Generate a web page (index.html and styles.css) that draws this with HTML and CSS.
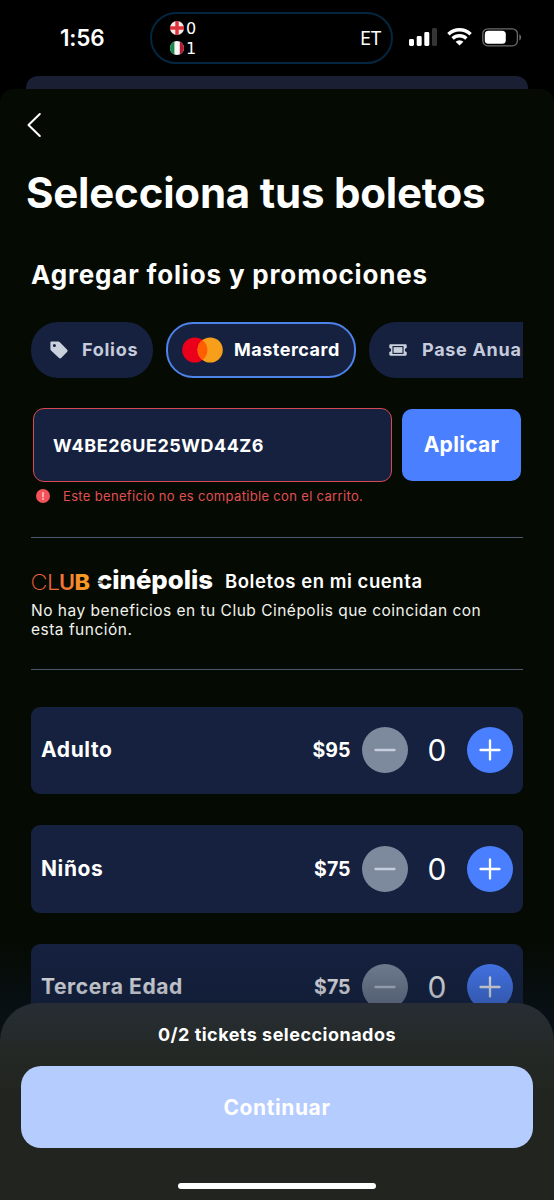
FILE: index.html
```html
<!DOCTYPE html>
<html lang="es">
<head>
<meta charset="utf-8">
<meta name="viewport" content="width=device-width, initial-scale=1">
<title>Selecciona tus boletos</title>
<link rel="stylesheet" href="styles.css">
</head>
<body>
<div class="phone">
  <header class="status">
    <div class="time">1:56</div>
    <div class="island">
      <div class="scores">
        <div class="score"><svg class="flag" viewBox="0 0 14 14"><circle cx="7" cy="7" r="7" fill="#f4ece6"/><path d="M7 0v14M0 7h14" stroke="#e0323c" stroke-width="3.4"/></svg><span>0</span></div>
        <div class="score"><svg class="flag" viewBox="0 0 14 14"><defs><clipPath id="round"><circle cx="7" cy="7" r="7"/></clipPath></defs><g clip-path="url(#round)"><path fill="#f7f7f7" d="M0 0h14v14H0z"/><path fill="#178a48" d="M0 0h4.4v14H0z"/><path fill="#b01c30" d="M9.8 0H14v14H9.8z"/></g></svg><span>1</span></div>
      </div>
      <div class="period">ET</div>
    </div>
    <div class="indicators">
      <svg class="signal" viewBox="0 0 29 18"><g fill="#fff"><rect x="0" y="11" width="5" height="7" rx="1.4"/><rect x="7.7" y="8" width="5" height="10" rx="1.4"/><rect x="15.3" y="4" width="5" height="14" rx="1.4"/></g><rect x="23" y="0" width="5" height="18" rx="1.4" fill="#353535"/></svg>
      <svg class="wifi" viewBox="0 0 25 18"><g fill="none" stroke="#fff" stroke-width="3.4"><path d="M1.4 6.2a16 16 0 0 1 22.2 0"/><path d="M5.6 10.5a10 10 0 0 1 13.8 0"/></g><path d="M8.6 13.7a5.7 5.7 0 0 1 7.8 0L12.5 17.6z" fill="#fff"/></svg>
      <svg class="battery" viewBox="0 0 40 19"><rect x=".8" y=".8" width="34.6" height="17" rx="5" fill="none" stroke="#6b6b6b" stroke-width="1.3"/><rect x="2.8" y="2.8" width="21" height="13" rx="3.6" fill="#fff"/><path d="M37.3 6.2c2.4 1 2.4 5.2 0 6.2z" fill="#6b6b6b"/></svg>
    </div>
  </header>
  <div class="backsheet"></div>
  <main class="sheet">
    <svg class="back" viewBox="0 0 16 26"><path d="M13.8 2 2.500 13l11.300 11" fill="none" stroke="#fff" stroke-width="2" stroke-linecap="round" stroke-linejoin="round"/></svg>
    <h1 class="title">Selecciona tus boletos</h1>
    <h2 class="subtitle">Agregar folios y promociones</h2>
    <div class="chips">
      <div class="chip chip-folios">
        <svg class="tag" viewBox="0 0 18 18"><path fill="#cbd1dc" fill-rule="evenodd" d="M.4 1.6C.4.9.9.4 1.6.4h6.6c.6 0 1 .2 1.4.6l7.4 7.4c.8.8.8 1.8 0 2.6l-5.6 5.8c-.8.8-1.8.8-2.6 0L1 9.4C.6 9 .4 8.600.4 8zM4.400 3a1.500 1.500 0 1 0 0 3 1.500 1.500 0 0 0 0-3z"/></svg>
        <span>Folios</span>
      </div>
      <div class="chip chip-master">
        <svg class="mc" viewBox="0 0 41 26"><circle cx="12.8" cy="13" r="12.6" fill="#eb001b"/><circle cx="28.200" cy="13" r="12.600" fill="#f79e1b"/><path d="M20.500 3a12.600 12.600 0 0 1 0 20 12.600 12.600 0 0 1 0-20z" fill="#ff5f00"/></svg>
        <span>Mastercard</span>
      </div>
      <div class="chip chip-pase">
        <svg class="pass" viewBox="0 0 18 12"><path fill="#cbd1dc" d="M1.500.3h15c.8 0 1.200.5 1.200 1.200v2.600a1.900 1.900 0 0 0 0 3.800v2.600c0 .7-.4 1.200-1.200 1.200h-15C.7 11.700.3 11.200.3 10.500V7.900a1.900 1.900 0 0 0 0-3.800V1.500C.3.800.7.300 1.500.3z"/><rect x="4" y="2.600" width="10" height="6.800" fill="none" stroke="#15213f" stroke-width="1.100"/></svg>
        <span>Pase Anua</span>
      </div>
    </div>
    <div class="promo">
      <div class="code">W4BE26UE25WD44Z6</div>
      <div class="apply">Aplicar</div>
    </div>
    <div class="error">
      <svg class="alert" viewBox="0 0 14 14"><circle cx="7" cy="7" r="7" fill="#f4525a"/><path d="M7 3.600v4.200M7 9.700v.6" stroke="#ffe3df" stroke-width="1.300" stroke-linecap="round"/></svg>
      <span>Este beneficio no es compatible con el carrito.</span>
    </div>
    <div class="divider"></div>
    <div class="club">
      <svg class="logo" viewBox="0 0 184 32">
        <defs><linearGradient id="warm" gradientUnits="userSpaceOnUse" x1="0" y1="24" x2="59" y2="10"><stop offset="0" stop-color="#e8563a"/><stop offset=".5" stop-color="#f0703a"/><stop offset="1" stop-color="#f9a51e"/></linearGradient></defs>
        <g class="logo-club" fill="url(#warm)"><text x="-.5" y="24.500" font-weight="250" textLength="17" lengthAdjust="spacingAndGlyphs">C</text><text x="16" y="24.500" font-weight="300" textLength="13" lengthAdjust="spacingAndGlyphs">L</text><text x="28" y="24.500" font-weight="600" textLength="16" lengthAdjust="spacingAndGlyphs">U</text><text x="43.500" y="24.500" font-weight="800" textLength="15.500" lengthAdjust="spacingAndGlyphs">B</text></g>
        <text class="logo-name" x="66" y="23.500" textLength="116" lengthAdjust="spacingAndGlyphs">cinépolis</text>
        <path d="M66 15.500l6 .9M66 18.600l6-.9" stroke="#050a02" stroke-width="1"/>
      </svg>
      <span class="club-label">Boletos en mi cuenta</span>
    </div>
    <p class="note">No hay beneficios en tu Club Cinépolis que coincidan con<br>esta función.</p>
    <div class="divider"></div>
    <div class="tickets">
      <div class="ticket"><span class="name">Adulto</span><span class="price">$95</span><svg class="round minus" viewBox="0 0 46 46"><path d="M13.500 23h19"/></svg><span class="qty">0</span><svg class="round plus" viewBox="0 0 46 46"><path d="M13.500 23h19M23 13.500v19"/></svg></div>
      <div class="ticket"><span class="name">Niños</span><span class="price">$75</span><svg class="round minus" viewBox="0 0 46 46"><path d="M13.500 23h19"/></svg><span class="qty">0</span><svg class="round plus" viewBox="0 0 46 46"><path d="M13.500 23h19M23 13.500v19"/></svg></div>
      <div class="ticket"><span class="name">Tercera Edad</span><span class="price">$75</span><svg class="round minus" viewBox="0 0 46 46"><path d="M13.500 23h19"/></svg><span class="qty">0</span><svg class="round plus" viewBox="0 0 46 46"><path d="M13.500 23h19M23 13.500v19"/></svg></div>
    </div>
  </main>
  <div class="fade"></div>
  <footer class="footer">
    <div class="count">0/2 tickets seleccionados</div>
    <div class="continue">Continuar</div>
    <div class="home"></div>
  </footer>
</div>
</body>
</html>
```
FILE: styles.css
```css
* { box-sizing: border-box; }
body { margin: 0; background: #000; }
svg { display: block; flex: none; }
.phone {
  position: relative;
  width: 554px;
  height: 1200px;
  overflow: hidden;
  display: flex;
  flex-direction: column;
  background: #000;
  color: #fff;
  font-family: Inter, "Liberation Sans", sans-serif;
  white-space: nowrap;
}
.status { height: 76px; flex: none; display: flex; align-items: flex-start; padding-top: 12px; }
.time { width: 150px; padding-left: 60px; font-size: 22.500px; line-height: 52px; font-weight: 600; letter-spacing: -0.2px; }
.island {
  width: 243px;
  height: 52px;
  border: 2px solid #04263f;
  border-radius: 26px;
  display: flex;
  justify-content: space-between;
  align-items: center;
  padding: 0 10px 0 18px;
}
.score { display: flex; align-items: center; gap: 2px; height: 20px; font-family: "DejaVu Sans", sans-serif; font-size: 16px; }
.flag { width: 14px; height: 14px; }
.period { font-size: 18px; letter-spacing: -0.8px; }
.indicators { display: flex; align-items: flex-start; padding: 16px 0 0 16px; }
.signal { width: 29px; height: 18px; margin-right: 9px; }
.wifi { width: 25px; height: 18px; margin-right: 10px; }
.battery { width: 40px; height: 19px; }
.backsheet { flex: none; height: 13px; margin: 0 26px; border-radius: 12px 12px 0 0; background: #1a1f33; }
.sheet { flex: 1; min-height: 0; padding: 23px 31px 0; border-radius: 13px 13px 0 0; background: #050a02; }
.back { width: 16px; height: 26px; margin-left: -5px; }
.title { margin: 30px 0 0 -5px; font-size: 42px; line-height: 50px; font-weight: 700; letter-spacing: -0.2px; }
.subtitle { margin: 42px 0 0; font-size: 26px; line-height: 30px; font-weight: 650; letter-spacing: .83px; }
.chips { display: flex; gap: 13px; margin-top: 32px; overflow: hidden; }
.chip {
  flex: none;
  height: 56px;
  display: flex;
  align-items: center;
  border-radius: 27px;
  background: #15213f;
  color: #c5cbdc;
  font-size: 18px;
  line-height: 22px;
  font-weight: 700;
  letter-spacing: .7px;
}
.chip-folios { width: 122px; padding-left: 19px; gap: 14px; }
.chip-master { width: 190px; padding-left: 14px; gap: 11px; border: 2px solid #4e83ec; color: #fff; letter-spacing: .5px; }
.chip-pase { width: 200px; padding-left: 20px; gap: 15px; letter-spacing: .7px; }
.tag { width: 18px; height: 18px; }
.mc { width: 41px; height: 26px; }
.pass { width: 18px; height: 12px; }
.promo { display: flex; gap: 10px; margin: 30px 2px 0; }
.code {
  width: 359px;
  height: 74px;
  padding-left: 19px;
  border: 1.500px solid #d64b53;
  border-radius: 11px;
  background: #15213f;
  font-size: 18px;
  line-height: 73px;
  font-weight: 650;
  letter-spacing: .52px;
}
.apply { width: 119px; height: 72px; margin-top: 1px; border-radius: 10px; background: #4a80ff; text-align: center; font-size: 21px; line-height: 71px; font-weight: 700; letter-spacing: .3px; }
.error { display: flex; align-items: center; gap: 13px; height: 20px; margin: 4px 0 0 5px; color: #e04f55; font-size: 13px; letter-spacing: .33px; }
.alert { width: 14px; height: 14px; }
.divider { height: 1px; background: #4d576e; }
.error + .divider { margin-top: 31px; }
.club { display: flex; align-items: center; height: 32px; margin-top: 27px; }
.logo { width: 184px; height: 32px; }
.logo-club { font-size: 21px; }
.logo-name { fill: #fff; font-size: 26px; font-weight: 800; }
.club-label { margin-left: 10px; font-size: 18.500px; font-weight: 600; letter-spacing: .56px; }
.note { margin: 4px 0 30px; font-size: 15.500px; line-height: 19px; letter-spacing: .49px; color: #f2f3ee; }
.tickets { display: flex; flex-direction: column; gap: 31px; margin-top: 36.500px; }
.ticket { height: 87.500px; display: flex; align-items: center; border-radius: 9px; background: #15213f; padding: 0 10.500px 0 10px; font-weight: 700; font-size: 21px; }
.name { flex: 1; letter-spacing: .6px; line-height: 24px; }
.price { margin-right: 11px; font-size: 19.500px; line-height: 24px; }
.qty { width: 59px; text-align: center; font-size: 30px; font-weight: 400; }
.round { width: 46px; height: 46px; border-radius: 50%; fill: none; stroke: #fff; stroke-width: 2.300; stroke-linecap: round; }
.minus { background: #7d8a9d; stroke: #c5cede; }
.plus { background: #4a80ff; }
.fade { position: absolute; left: 0; right: 0; bottom: 0; height: 260px; background: linear-gradient(rgba(14, 24, 44, 0), rgba(14, 24, 44, .45) 75px); }
.footer { position: absolute; left: 0; right: 0; bottom: 0; height: 197px; padding: 16px 21px 0; border-radius: 38px 38px 0 0; background: linear-gradient(#282d35, #242927 45px, #22251f 90px); }
.count { height: 30px; line-height: 32px; text-align: center; font-size: 18px; font-weight: 650; letter-spacing: .48px; }
.continue { height: 82px; margin-top: 17px; border-radius: 20px; background: #b5ccff; text-align: center; line-height: 83px; font-size: 21px; font-weight: 700; letter-spacing: .6px; }
.home { width: 198px; height: 6px; margin: 35px auto 0; border-radius: 3px; background: #fff; }
```
